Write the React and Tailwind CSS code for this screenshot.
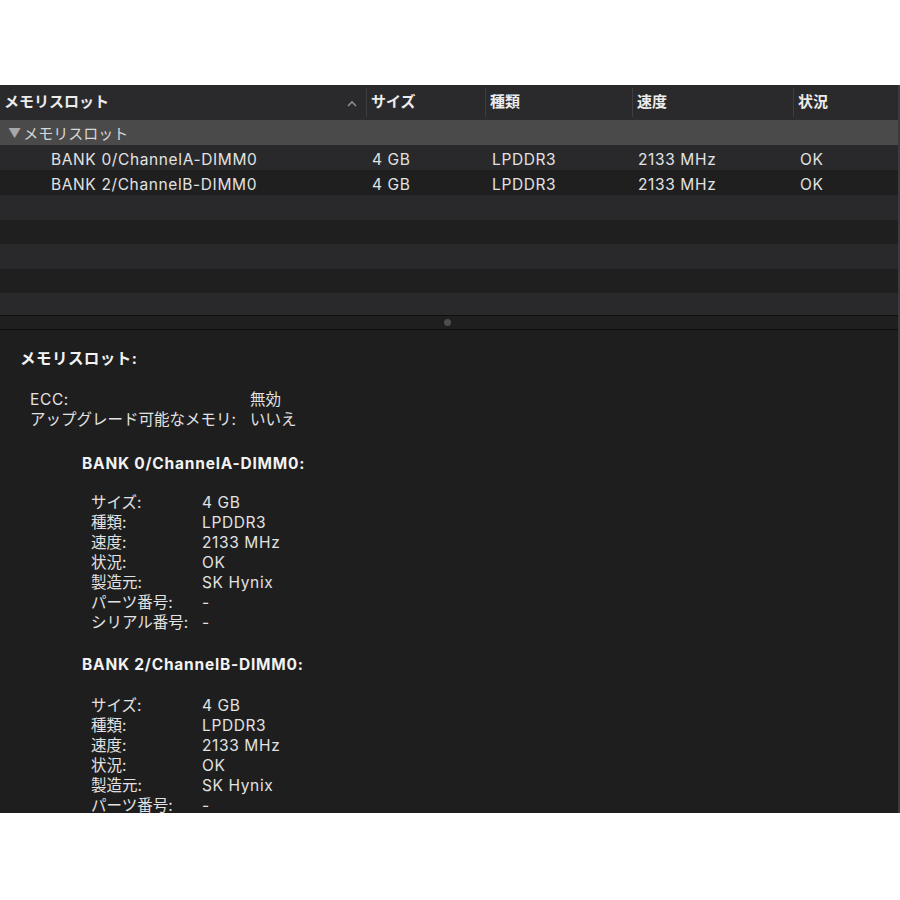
const font = { fontFamily: 'Inter, "Noto Sans CJK JP", sans-serif' }

const rows = [
	{ name: 'BANK 0/ChannelA-DIMM0', size: '4 GB', type: 'LPDDR3', speed: '2133 MHz', status: 'OK' },
	{ name: 'BANK 2/ChannelB-DIMM0', size: '4 GB', type: 'LPDDR3', speed: '2133 MHz', status: 'OK' },
]

const details = (r) => [
	['サイズ:', r.size],
	['種類:', r.type],
	['速度:', r.speed],
	['状況:', r.status],
	['製造元:', 'SK Hynix'],
	['パーツ番号:', '-'],
	['シリアル番号:', '-'],
]

const cols = 'grid grid-cols-[366px_119px_147px_161px_1fr]'

function Row({ r, light }) {
	return (
		<div className={`${cols} h-[25px] pt-[3px] items-center text-[15.5px] tracking-[0.04em] text-[#e2e2e2] ${light ? 'bg-[#29292b]' : 'bg-[#1f1f20]'}`}>
			<span className="pl-[51px]">{r.name}</span>
			<span className="pl-[6px]">{r.size}</span>
			<span className="pl-[7px]">{r.type}</span>
			<span className="pl-[6px]">{r.speed}</span>
			<span className="pl-[7px]">{r.status}</span>
		</div>
	)
}

export default function App() {
	return (
		<div className="w-[900px] h-[900px] bg-white flex flex-col" style={font}>
			<div className="h-[85px] shrink-0" />
			<div className="h-[728px] shrink-0 flex flex-col bg-[#1e1e1e] border-r-2 border-[#3b3b3b] overflow-hidden">
				{/* table */}
				<div className="h-[230px] shrink-0 flex flex-col overflow-hidden">
					<div className={`${cols} h-[35px] shrink-0 bg-[#2a2a2c] py-[3px] text-[15px] font-semibold text-[#ececec]`}>
						<div className="flex items-center justify-between pl-[4px] pr-[9px]">
							<span className="font-bold">メモリスロット</span>
							<svg width="10" height="7" viewBox="0 0 10 7" className="mt-[1px]">
								<polyline points="1,6 5,2 9,6" fill="none" stroke="#8c8c8c" strokeWidth="1.6" />
							</svg>
						</div>
						<div className="flex items-center border-l border-[#3e3e40] pl-[4px]">サイズ</div>
						<div className="flex items-center border-l border-[#3e3e40] pl-[4px]">種類</div>
						<div className="flex items-center border-l border-[#3e3e40] pl-[4px]">速度</div>
						<div className="flex items-center border-l border-[#3e3e40] pl-[4px]">状況</div>
					</div>
					<div className="h-[25px] shrink-0 flex items-center pt-[3px] bg-[#4a4a4b] text-[15px] text-[#d8d8d8]">
						<span className="pl-[8px] pr-[2px] text-[13px] text-[#a8a8a8]">▼</span>
						<span>メモリスロット</span>
					</div>
					<Row r={rows[0]} light />
					<Row r={rows[1]} />
					<div className="h-[25px] shrink-0 bg-[#29292b]" />
					<div className="h-[24px] shrink-0 bg-[#1f1f20]" />
					<div className="h-[25px] shrink-0 bg-[#29292b]" />
					<div className="h-[24px] shrink-0 bg-[#1f1f20]" />
					<div className="h-[22px] shrink-0 bg-[#29292b]" />
				</div>
				{/* splitter */}
				<div className="h-[15px] shrink-0 flex items-center justify-center border-y border-[#0e0e0e] bg-[#1f1f1f]">
					<div className="w-[7px] h-[7px] rounded-full bg-[#4e4e4e] ml-[-4px]" />
				</div>
				{/* details */}
				<div className="flex-1 pl-[20px] pt-[19px] text-[15.5px] leading-[20px] tracking-[0.04em] text-[#e2e2e2]">
					<div className="font-bold text-[#f2f2f2] tracking-[0.03em]">メモリスロット:</div>
					<div className="mt-[21px] pl-[10px] grid grid-cols-[220px_1fr]">
						<span>ECC:</span>
						<span className="tracking-normal">無効</span>
						<span className="tracking-normal">アップグレード可能なメモリ:</span>
						<span className="tracking-normal">いいえ</span>
					</div>
					{rows.map((r, i) => (
						<div key={r.name} className={`pl-[62px] ${i === 0 ? 'mt-[24px]' : 'mt-[22px]'}`}>
							<div className="font-bold text-[#f2f2f2] tracking-[0.05em]">{r.name}:</div>
							<div className={`pl-[9px] grid grid-cols-[111px_1fr] ${i === 0 ? 'mt-[19px]' : 'mt-[21px]'}`}>
								{details(r).slice(0, i === 0 ? 7 : 6).map(([k, v]) => (
									<div key={k} className="contents">
										<span className="tracking-normal">{k}</span>
										<span>{v}</span>
									</div>
								))}
							</div>
						</div>
					))}
				</div>
			</div>
			<div className="flex-1" />
		</div>
	)
}
